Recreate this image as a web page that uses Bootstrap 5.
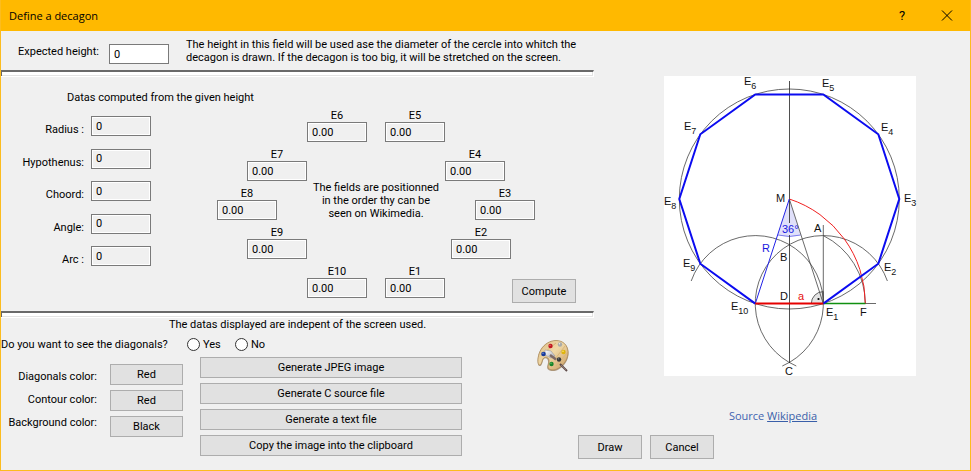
<!DOCTYPE html>
<html lang="en">
<head>
<meta charset="utf-8">
<meta name="viewport" content="width=device-width, initial-scale=1">
<title>Define a decagon</title>
<link href="https://cdn.jsdelivr.net/npm/bootstrap@5.3.0/dist/css/bootstrap.min.css" rel="stylesheet">
<style>
body { font-family: Roboto, "Noto Sans", sans-serif; font-size: 11px; line-height: 13px; color: #000; background: #f0f0f0; }
.dialog { border: 1px solid #fcbc1e; border-top: 0; }
.title-bar { height: 31px; background: #ffb900; padding: 0 15px 0 8px; }
.title-bar h1 { font-family: "Open Sans", sans-serif; font-size: 11px; line-height: 16px; }
.title-bar button { border: 0; background: none; padding: 0; width: 16px; height: 16px; font-size: 13px; line-height: 16px; color: #000; }
.title-bar .tools { gap: 29px; }
.title-bar svg, .palette, .diagram { display: block; }

.layout { display: grid; grid-template-columns: 577fr 16fr 376fr; grid-template-rows: auto 1fr auto; }
.computing { grid-area: 1 / 1 / 2 / 3; }
.options { grid-area: 2 / 1 / 4 / 2; }
.illustration { grid-area: 1 / 3 / 3 / 4; padding: 45px 0 0 70px; }
.actions { grid-area: 3 / 2 / 4 / 4; padding-bottom: 11px; }

.rule { height: 7px; border: 1px solid #fff; border-top: 2px solid #696969; border-left: 0; background: #fff; box-shadow: inset 1px 0 #696969, inset 0 -1px #e3e3e3, inset -1px 0 #e3e3e3; opacity: 1; margin: 0; }
.field { width: 60px; height: 20px; padding: 0 4px; border: 1px solid #7a7a7a; border-radius: 0; font-size: 11px; line-height: 13px; color: #000; background: #fff; }
.field[readonly] { background: #f0f0f0; box-shadow: inset 0 0 0 1px #fff; }
.push { height: 21px; padding: 0; border: 1px solid #adadad; border-radius: 0; background: #e1e1e1; color: #000; font-size: 11px; line-height: 13px; }
.push:hover { background: #e5f1fb; border-color: #0078d7; color: #000; }
.push-tall { width: 64px; height: 24px; }

.height-row { height: 39px; padding: 7px 0 0 17px; }
.height-row .field { margin: 6px 17px 0 8px; }
.height-row label { padding-top: 7px; width: 83px; }
.section-title { font-size: 11px; line-height: 13px; padding: 14px 0 5px 66px; }
.measures { width: 216px; height: 157px; padding: 7px 66px 0 0; }
.measures label { padding: 7px 7px 0 0; }

/* Fields laid out like the vertices of a decagon */
.vertices { display: grid; grid-template-columns: 30px 30px 30px 60px 18px 60px 6px 24px 30px 6px 24px 41px; grid-template-rows: repeat(4, 33px) 38px; row-gap: 6px; padding-bottom: 8px; }
.v1 { grid-area: 5 / 6; } .v10 { grid-area: 5 / 4; }
.v2 { grid-area: 4 / 8 / 5 / 11; } .v9 { grid-area: 4 / 2 / 5 / 4; }
.v3 { grid-area: 3 / 9 / 4 / 12; } .v8 { grid-area: 3 / 1 / 4 / 3; }
.v4 { grid-area: 2 / 7 / 3 / 10; } .v7 { grid-area: 2 / 2 / 3 / 4; }
.v5 { grid-area: 1 / 6; } .v6 { grid-area: 1 / 4; }
.vertices label { display: block; }
.hint { grid-area: 2 / 4 / 4 / 7; }
.compute { grid-area: 5 / 11 / 6 / 13; }

.question { padding-top: 1px; height: 26px; }
.question-text { width: 186px; }
.question label { width: 35px; padding-left: 3px; }
.question .form-check-input { width: 13px; height: 13px; margin: 0; border: 1px solid #333; background-color: #fff; }
.question .form-check-input:checked { background-color: #333; }
.color-labels { width: 109px; padding: 13px 13px 0 0; gap: 10px; }
.color-buttons { width: 73px; padding-top: 7px; gap: 5px; }
.exports { width: 262px; gap: 5px; margin-left: 17px; }
.palette-box { padding: 8px 8px 0 0; }

.figure-box { width: 252px; }
.source { font-family: "Open Sans", sans-serif; line-height: 16px; color: #4264b0; padding: 32px 34px 0 0; }
.source a { color: #3a5fa9; }
.diagram { font: 11px "Liberation Sans", sans-serif; background: #fff; overflow: visible; }
.diagram .idx { font-size: 9px; }
</style>
</head>
<body>
<main class="dialog d-flex flex-column min-vh-100">
  <header class="title-bar d-flex align-items-center justify-content-between">
    <h1 class="m-0 fw-normal">Define a decagon</h1>
    <div class="tools d-flex">
      <button type="button" aria-label="Help">?</button>
      <button type="button" aria-label="Close"><svg width="16" height="16" viewBox="0 0 16 16"><path d="M3 2.500l10 10M13 2.500l-10 10" stroke="#000" fill="none"/></svg></button>
    </div>
  </header>

  <form class="layout flex-grow-1">
    <section class="computing">
      <div class="height-row d-flex align-items-start">
        <label for="height" class="text-nowrap">Expected height:</label>
        <input id="height" class="field" type="text" value="0">
        <p class="m-0">The height in this field will be used ase the diameter of the cercle into whitch the<br>decagon is drawn. If the decagon is too big, it will be stretched on the screen.</p>
      </div>
      <hr class="rule">
      <h2 class="section-title m-0 fw-normal">Datas computed from the given height</h2>
      <div class="d-flex align-items-start">
        <div class="measures d-flex flex-column justify-content-between">
          <div class="d-flex justify-content-end"><label for="radius">Radius :</label><input id="radius" class="field" value="0" readonly></div>
          <div class="d-flex justify-content-end"><label for="hypo">Hypothenus:</label><input id="hypo" class="field" value="0" readonly></div>
          <div class="d-flex justify-content-end"><label for="choord">Choord:</label><input id="choord" class="field" value="0" readonly></div>
          <div class="d-flex justify-content-end"><label for="angle">Angle:</label><input id="angle" class="field" value="0" readonly></div>
          <div class="d-flex justify-content-end"><label for="arc">Arc :</label><input id="arc" class="field" value="0" readonly></div>
        </div>
        <div class="vertices text-center">
          <div class="v6"><label for="e6">E6</label><input id="e6" class="field" value="0.00" readonly></div>
          <div class="v5"><label for="e5">E5</label><input id="e5" class="field" value="0.00" readonly></div>
          <div class="v7"><label for="e7">E7</label><input id="e7" class="field" value="0.00" readonly></div>
          <div class="v4"><label for="e4">E4</label><input id="e4" class="field" value="0.00" readonly></div>
          <div class="v8"><label for="e8">E8</label><input id="e8" class="field" value="0.00" readonly></div>
          <p class="hint m-0 align-self-end">The fields are positionned<br>in the order thy can be<br>seen on Wikimedia.</p>
          <div class="v3"><label for="e3">E3</label><input id="e3" class="field" value="0.00" readonly></div>
          <div class="v9"><label for="e9">E9</label><input id="e9" class="field" value="0.00" readonly></div>
          <div class="v2"><label for="e2">E2</label><input id="e2" class="field" value="0.00" readonly></div>
          <div class="v10"><label for="e10">E10</label><input id="e10" class="field" value="0.00" readonly></div>
          <div class="v1"><label for="e1">E1</label><input id="e1" class="field" value="0.00" readonly></div>
          <button type="button" class="btn push push-tall compute align-self-end ms-auto">Compute</button>
        </div>
      </div>
      <hr class="rule">
      <p class="m-0 text-center">The datas displayed are indepent of the screen used.</p>
    </section>

    <section class="options d-flex justify-content-between align-items-start">
      <div>
        <div class="question d-flex align-items-center" role="radiogroup" aria-labelledby="diag-question">
          <span id="diag-question" class="question-text text-nowrap">Do you want to see the diagonals?</span>
          <input class="form-check-input" type="radio" name="diagonals" id="diag-yes"><label for="diag-yes">Yes</label>
          <input class="form-check-input" type="radio" name="diagonals" id="diag-no"><label for="diag-no">No</label>
        </div>
        <div class="d-flex align-items-start">
          <div class="color-labels d-flex flex-column text-end text-nowrap">
            <label for="c-diag">Diagonals color:</label>
            <label for="c-contour">Contour color:</label>
            <label for="c-back">Background color:</label>
          </div>
          <div class="color-buttons d-flex flex-column">
            <button type="button" id="c-diag" class="btn push">Red</button>
            <button type="button" id="c-contour" class="btn push">Red</button>
            <button type="button" id="c-back" class="btn push">Black</button>
          </div>
          <div class="exports d-flex flex-column">
            <button type="button" class="btn push">Generate JPEG image</button>
            <button type="button" class="btn push">Generate C source file</button>
            <button type="button" class="btn push">Generate a text file</button>
            <button type="button" class="btn push">Copy the image into the clipboard</button>
          </div>
        </div>
      </div>
      <div class="palette-box">
        <svg class="palette" width="34" height="34" viewBox="0 0 34 34" role="img" aria-label="Palette">
          <defs>
            <linearGradient id="wood" x1="0" y1="0" x2="1" y2="1"><stop offset="0" stop-color="#d9bb85"/><stop offset=".45" stop-color="#f0d8a6"/><stop offset="1" stop-color="#c89c62"/></linearGradient>
            <linearGradient id="brush" x1="0" y1="0" x2="1" y2="1"><stop offset="0" stop-color="#fff"/><stop offset="1" stop-color="#a9a9b2"/></linearGradient>
          </defs>
          <path d="M2.500 26.500C1 23 1.500 16 4.500 11C8 5 14 1.500 20 1.500C27 1.500 32 6 32.500 13C33 20 29 27 22.500 30.500C19 32.500 14.500 32.500 12 30.500C10 28.500 12.500 25 12 22C11.500 18.500 8 18.500 7 21.500C6 25 5.500 28.500 2.500 26.500Z" fill="#7a5a32" opacity=".55"/>
          <path d="M2.500 25.500C1.200 22 2 15.500 5 10.500C8.500 5 14 1.500 20 1.500C27 1.500 31.500 6 32 12.500C32.500 19 28.500 26 22 29.500C19 31.300 15 31.500 12.500 29.500C11 27.500 13.500 24.500 13 21C12 17 7.500 17.500 6.500 21C5.500 24 5 27 2.500 25.500Z" fill="url(#wood)" stroke="#a98552" stroke-width=".7"/>
          <path d="M9 13L20 4M19 20L29 7M20 27L31 14" stroke="#d8b67c" stroke-width="1" fill="none"/>
          <path d="M24 25l7 7" stroke="#5e4b49" stroke-width="2"/>
          <path d="M25 26l5 5" stroke="#a08c88" stroke-width=".7"/>
          <path d="M9 11l6 1 4 5-4 2-6-3z" fill="url(#brush)" stroke="#8d8d96" stroke-width=".5"/>
          <path d="M14 16l6 4.500" stroke="#7e6a66" stroke-width="2.500"/>
          <circle cx="7.500" cy="15" r="2.300" fill="#173a9b"/><circle cx="7" cy="14.300" r=".7" fill="#7c9be8"/>
          <circle cx="14.500" cy="7" r="2.200" fill="#c21822"/><circle cx="14" cy="6.300" r=".6" fill="#f58a8a"/>
          <circle cx="24" cy="5.500" r="2.200" fill="#a9aaa9"/><circle cx="23.500" cy="4.800" r=".7" fill="#eee"/>
          <circle cx="27.500" cy="13" r="2.200" fill="#dfb40c"/><circle cx="27" cy="12.200" r=".7" fill="#fff08a"/>
          <circle cx="23" cy="20.500" r="2.200" fill="#33363b"/><circle cx="22.500" cy="19.800" r=".6" fill="#888"/>
          <circle cx="15.500" cy="25" r="2.200" fill="#17852a"/><circle cx="15" cy="24.200" r=".6" fill="#7fdc84"/>
        </svg>
      </div>
    </section>

    <section class="illustration">
      <div class="figure-box">
        <svg class="diagram" width="252" height="300" viewBox="664 76 252 300" role="img" aria-label="Construction of a regular decagon">
          <path d="M789.300 199L778 235Q789.300 238 800.700 235Z" fill="#e0e0fa"/>
          <path d="M778 235Q789.300 238 800.700 235" fill="none" stroke="#6060e8" stroke-width=".8"/>
          <path d="M811.300 303.600A12 12 0 0 1 823.300 291.600V303.600Z" fill="#e3e3e3" stroke="#444" stroke-width=".8"/>
          <circle cx="818.500" cy="299" r="1.100"/>
          <g fill="none" stroke="#444" stroke-width=".8">
            <circle cx="789.300" cy="199" r="110"/>
            <path d="M691.200 281A68 68 0 1 1 782.300 366"/>
            <path d="M887.400 281A68 68 0 1 0 796.300 366"/>
            <path d="M823.300 235.600A76 76 0 0 1 865.300 303.600"/>
            <path d="M789.300 199L823.300 303.600M823.300 225V303.600M865 303.500H876"/>
            <path d="M789.500 81V223M789.500 235V363" stroke="#222"/>
          </g>
          <path d="M789.300 199A110 110 0 0 1 865.300 303.600" fill="none" stroke="#f02020"/>
          <path d="M789.300 199L755.300 303.600" stroke="#2222e8"/>
          <path d="M823.300 303.500H865.500" stroke="#109010" stroke-width="1.400"/>
          <path d="M755.300 303.600L700.300 263.700L679.300 199L700.300 134.300L755.300 94.400H823.300L878.300 134.300L899.300 199L878.300 263.700L823.300 303.600" fill="none" stroke="#0b0bf0" stroke-width="2"/>
          <path d="M755.300 303.500H823.300" stroke="#e60000" stroke-width="2"/>
          <g fill="#111">
            <text x="744" y="85">E<tspan class="idx" dy="4">6</tspan></text>
            <text x="822" y="87">E<tspan class="idx" dy="4">5</tspan></text>
            <text x="684" y="130">E<tspan class="idx" dy="4">7</tspan></text>
            <text x="881" y="131">E<tspan class="idx" dy="4">4</tspan></text>
            <text x="904" y="202">E<tspan class="idx" dy="4">3</tspan></text>
            <text x="664" y="205">E<tspan class="idx" dy="4">8</tspan></text>
            <text x="683" y="267">E<tspan class="idx" dy="4">9</tspan></text>
            <text x="884" y="271">E<tspan class="idx" dy="4">2</tspan></text>
            <text x="731" y="310">E<tspan class="idx" dy="4">10</tspan></text>
            <text x="826" y="316">E<tspan class="idx" dy="4">1</tspan></text>
            <text x="776" y="202">M</text>
            <text x="814" y="232">A</text>
            <text x="780" y="261">B</text>
            <text x="780" y="300">D</text>
            <text x="860" y="316">F</text>
            <text x="785" y="375">C</text>
          </g>
          <text x="782" y="233" fill="#1818e0">36°</text>
          <text x="762" y="252" fill="#1818e0">R</text>
          <text x="798" y="300" fill="#e61010">a</text>
        </svg>
        <p class="source m-0 text-center">Source <a href="https://www.wikipedia.org/">Wikipedia</a></p>
      </div>
    </section>

    <div class="actions d-flex gap-2">
      <button type="button" class="btn push push-tall">Draw</button>
      <button type="button" class="btn push push-tall">Cancel</button>
    </div>
  </form>
</main>
<script src="https://cdn.jsdelivr.net/npm/bootstrap@5.3.0/dist/js/bootstrap.bundle.min.js"></script>
</body>
</html>
